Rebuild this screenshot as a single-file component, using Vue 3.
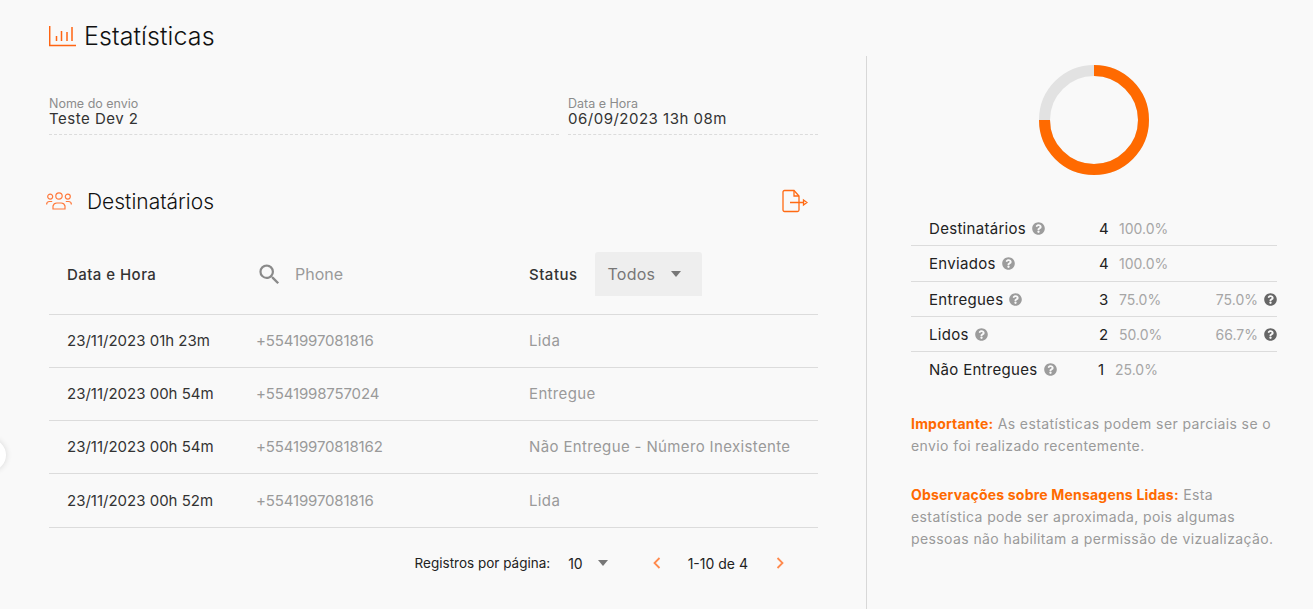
<script setup>
const rows = [
  { date: '23/11/2023 01h 23m', phone: '+5541997081816', status: 'Lida' },
  { date: '23/11/2023 00h 54m', phone: '+5541998757024', status: 'Entregue' },
  { date: '23/11/2023 00h 54m', phone: '+55419970818162', status: 'Não Entregue - Número Inexistente' },
  { date: '23/11/2023 00h 52m', phone: '+5541997081816', status: 'Lida' }
]
const stats = [
  { label: 'Destinatários', n: 4, pct: '100.0%', extra: '' },
  { label: 'Enviados', n: 4, pct: '100.0%', extra: '' },
  { label: 'Entregues', n: 3, pct: '75.0%', extra: '75.0%' },
  { label: 'Lidos', n: 2, pct: '50.0%', extra: '66.7%' },
  { label: 'Não Entregues', n: 1, pct: '25.0%', extra: '' }
]
const qPath = 'M504 256c0 136.997-111.043 248-248 248S8 392.997 8 256C8 119.083 119.043 8 256 8s248 111.083 248 248zM262.655 90c-54.497 0-89.255 22.957-116.549 63.758-3.536 5.286-2.353 12.415 2.715 16.258l34.699 26.31c5.205 3.947 12.621 3.008 16.665-2.122 17.864-22.658 30.113-35.797 57.303-35.797 20.429 0 45.698 13.148 45.698 32.958 0 14.976-12.363 22.667-32.534 33.976C247.128 238.528 216 254.941 216 296v4c0 6.627 5.373 12 12 12h56c6.627 0 12-5.373 12-12v-1.333c0-28.462 83.186-29.647 83.186-106.667 0-58.002-60.165-102-116.531-102zM256 338c-25.365 0-46 20.635-46 46 0 25.364 20.635 46 46 46s46-20.636 46-46c0-25.365-20.635-46-46-46z'
</script>

<template>
  <div class="page">
    <span class="edge"></span>
    <section class="left">
      <header class="title">
        <svg width="27" height="21" viewBox="0 0 27 21" fill="none" stroke="#ff6412" stroke-width="1.500">
          <path d="M.7 0v19.600H27" />
          <path d="M7.500 10v5M12.500 5v10M18 6v9M23 1v14" />
        </svg>
        <h1>Estatísticas</h1>
      </header>

      <div class="fields">
        <div class="field first">
          <label>Nome do envio</label>
          <div>Teste Dev 2</div>
        </div>
        <div class="field second">
          <label>Data e Hora</label>
          <div>06/09/2023 13h 08m</div>
        </div>
      </div>

      <div class="sub">
        <svg class="people" width="26" height="18" viewBox="0 0 26 18" fill="none" stroke="#ff7a3d" stroke-width="1.200">
          <circle cx="13" cy="4" r="3.200" />
          <circle cx="4.200" cy="4.600" r="2.500" />
          <circle cx="21.800" cy="4.600" r="2.500" />
          <path d="M7 17v-3a4 4 0 0 1 4-3h4a4 4 0 0 1 4 3v3z" />
          <path d="M.6 12.500c0-2 1.400-3 3-3h2.600M25.400 12.500c0-2-1.400-3-3-3h-2.600" />
        </svg>
        <h2>Destinatários</h2>
        <svg class="export" width="26" height="24" viewBox="0 0 26 24" fill="none" stroke="#ff6a13" stroke-width="1.300">
          <path d="M17 7v14a1.500 1.500 0 0 1-1.500 1.500h-13A1.500 1.500 0 0 1 1 21V3a1.500 1.500 0 0 1 1.500-1.500H12z" />
          <path d="M12 1.500V7h5" />
          <path d="M8 13.500h13.500M21.500 11v5l3.500-2.500z" />
        </svg>
      </div>

      <div class="table">
        <div class="row head">
          <div class="c1 strong dateHead">Data e Hora</div>
          <div class="c2 search">
            <svg width="27" height="27" viewBox="0 0 24 24" fill="#8a8a8a"><path d="M15.500 14h-.79l-.28-.27A6.470 6.470 0 0 0 16 9.500 6.500 6.500 0 1 0 9.500 16c1.610 0 3.090-.59 4.230-1.570l.27.28v.79l5 4.990L20.490 19l-4.990-5zm-6 0C7.010 14 5 11.990 5 9.500S7.010 5 9.500 5 14 7.010 14 9.500 11.990 14 9.500 14z"/></svg>
            <span>Phone</span>
          </div>
          <div class="c3 statusHead">
            <span class="strong">Status</span>
            <div class="select"><span>Todos</span><i class="caret"></i></div>
          </div>
        </div>
        <div v-for="r in rows" :key="r.phone + r.date" class="row">
          <div class="c1">{{ r.date }}</div>
          <div class="c2 muted phone">{{ r.phone }}</div>
          <div class="c3 muted status">{{ r.status }}</div>
        </div>
      </div>

      <div class="pager">
        <span class="perPage">Registros por página:</span>
        <span class="size">10</span><i class="caret"></i>
        <svg class="chev prev" width="8" height="12" viewBox="0 0 8 12" fill="none" stroke="#ff8a4d" stroke-width="1.800"><path d="M6.500 1 1.500 6l5 5" /></svg>
        <span class="range">1-10 de 4</span>
        <svg class="chev" width="8" height="12" viewBox="0 0 8 12" fill="none" stroke="#ff8a4d" stroke-width="1.800"><path d="M1.500 1l5 5-5 5" /></svg>
      </div>
    </section>

    <aside class="right">
      <svg class="donut" width="112" height="112" viewBox="0 0 112 112" fill="none" stroke-width="11">
        <circle cx="56" cy="56" r="49.500" stroke="#e2e2e2" />
        <circle cx="56" cy="56" r="49.500" stroke="#ff6a00" pathLength="100" stroke-dasharray="75 25" transform="rotate(-90 56 56)" />
      </svg>

      <div class="stats">
        <div v-for="s in stats" :key="s.label" class="stat">
          <div class="label">{{ s.label }}
            <svg width="13" height="13" viewBox="0 0 512 512" fill="#9c9c9c"><path :d="qPath" /></svg>
          </div>
          <div class="num" :class="{ one: s.n === 1 }">{{ s.n }}</div>
          <div class="pct">{{ s.pct }}</div>
          <div v-if="s.extra" class="extra">{{ s.extra }}
            <svg width="13" height="13" viewBox="0 0 512 512" fill="#666"><path :d="qPath" /></svg>
          </div>
        </div>
      </div>

      <p class="note"><b>Importante:</b> As estatísticas podem ser parciais se o envio foi realizado recentemente.</p>
      <p class="note"><b>Observações sobre Mensagens Lidas:</b> Esta estatística pode ser aproximada, pois algumas pessoas não habilitam a permissão de vizualização.</p>
    </aside>
  </div>
</template>

<style>
html, body { margin: 0; background: #f9f9f9; }
</style>

<style scoped>
.page {
  position: relative;
  display: flex;
  height: 609px;
  overflow: hidden;
  background: #f9f9f9;
  font-family: Inter, "Liberation Sans", sans-serif;
  color: #222;
  font-size: 15px;
}
.edge {
  position: absolute;
  left: -26px;
  top: 439px;
  width: 32px;
  height: 32px;
  border-radius: 50%;
  background: #fff;
  box-shadow: 0 0 6px rgba(0, 0, 0, .14);
}
.left { width: 769px; margin-left: 49px; flex: none; }
.title { display: flex; align-items: center; gap: 8px; height: 27px; margin-top: 23px; }
h1 { margin: -2px 0 0; font-size: 25px; font-weight: 300; letter-spacing: .1px; color: #111; }
.fields { display: flex; gap: 9px; margin-top: 47px; }
.field { border-bottom: 1px dashed #dcdcdc; height: 38px; box-sizing: border-box; font-size: 15px; line-height: 16px; letter-spacing: .5px; color: #333; }
.field label { display: block; font-size: 12.500px; line-height: 14px; letter-spacing: 0; color: #8c8c8c; }
.first { width: 510px; }
.second { width: 250px; }
.sub { display: flex; align-items: center; height: 36px; margin-top: 48px; margin-left: -3px; }
.sub h2 { margin: 0 0 0 15px; font-size: 21px; font-weight: 300; color: #111; }
.export { margin-left: auto; margin-right: 10px; }
.table { margin-top: 33px; font-size: 15px; }
.row { display: flex; align-items: center; height: 51px; padding-bottom: 1px; border-bottom: 1px solid #dcdcdc; }
.row:last-child { height: 52px; }
.row.head { height: 62px; padding-bottom: 0; align-items: flex-start; }
.c1 { width: 189px; padding-left: 18px; color: #333; }
.c2 { width: 273px; }
.dateHead { height: 44px; line-height: 46px; letter-spacing: .45px; }
.muted { color: #9a9a9a; }
.phone { letter-spacing: -.15px; }
.status { letter-spacing: .36px; }
.strong { font-weight: 500; color: #333; }
.search { display: flex; align-items: center; gap: 12px; height: 44px; color: #9a9a9a; font-size: 16px; }
.statusHead { display: flex; align-items: center; gap: 17px; height: 44px; letter-spacing: .5px; }
.select {
  display: flex;
  align-items: center;
  justify-content: space-between;
  width: 107px;
  height: 44px;
  box-sizing: border-box;
  padding: 0 21px 0 13px;
  background: #eeeeee;
  border-radius: 3px 3px 0 0;
  color: #777;
  font-size: 16px;
  letter-spacing: .2px;
}
.caret { display: block; width: 0; height: 0; border-left: 5.500px solid transparent; border-right: 5.500px solid transparent; border-top: 6px solid #777; }
.pager { display: flex; align-items: center; justify-content: flex-end; height: 20px; margin-top: 25px; font-size: 14px; color: #222; padding-right: 34px; }
.perPage { font-size: 13.500px; }
.size { margin-left: 18px; margin-right: 15px; }
.prev { margin-left: 45px; }
.range { margin: 0 28px 0 27px; }
.right { flex: 1; margin: 56px 0 0 48px; border-left: 1px solid #d8d8d8; padding-left: 44px; padding-right: 36px; }
.donut { display: block; margin: 8px 0 0 127px; }
.stats { margin-top: 35px; }
.stat { display: flex; align-items: center; height: 34px; border-bottom: 1px solid #dcdcdc; padding-left: 18px; font-size: 15px; color: #222; }
.stat:nth-child(2) { height: 35px; }
.stat:last-child { border-bottom: none; }
.label { width: 170px; display: flex; align-items: center; gap: 6px; flex: none; letter-spacing: .3px; }
.num { width: 20px; }
.num.one { width: 17px; margin-left: -1px; }
.pct { color: #a6a6a6; font-size: 14px; }
.extra { margin-left: auto; color: #a6a6a6; font-size: 14px; display: flex; align-items: center; gap: 6px; }
.note { margin: 0 0 27px; font-size: 14px; line-height: 22px; letter-spacing: .4px; color: #9a9a9a; }
.note:first-of-type { margin-top: 27px; }
.note b { color: #ff6a00; font-weight: 700; letter-spacing: .2px; }
</style>
